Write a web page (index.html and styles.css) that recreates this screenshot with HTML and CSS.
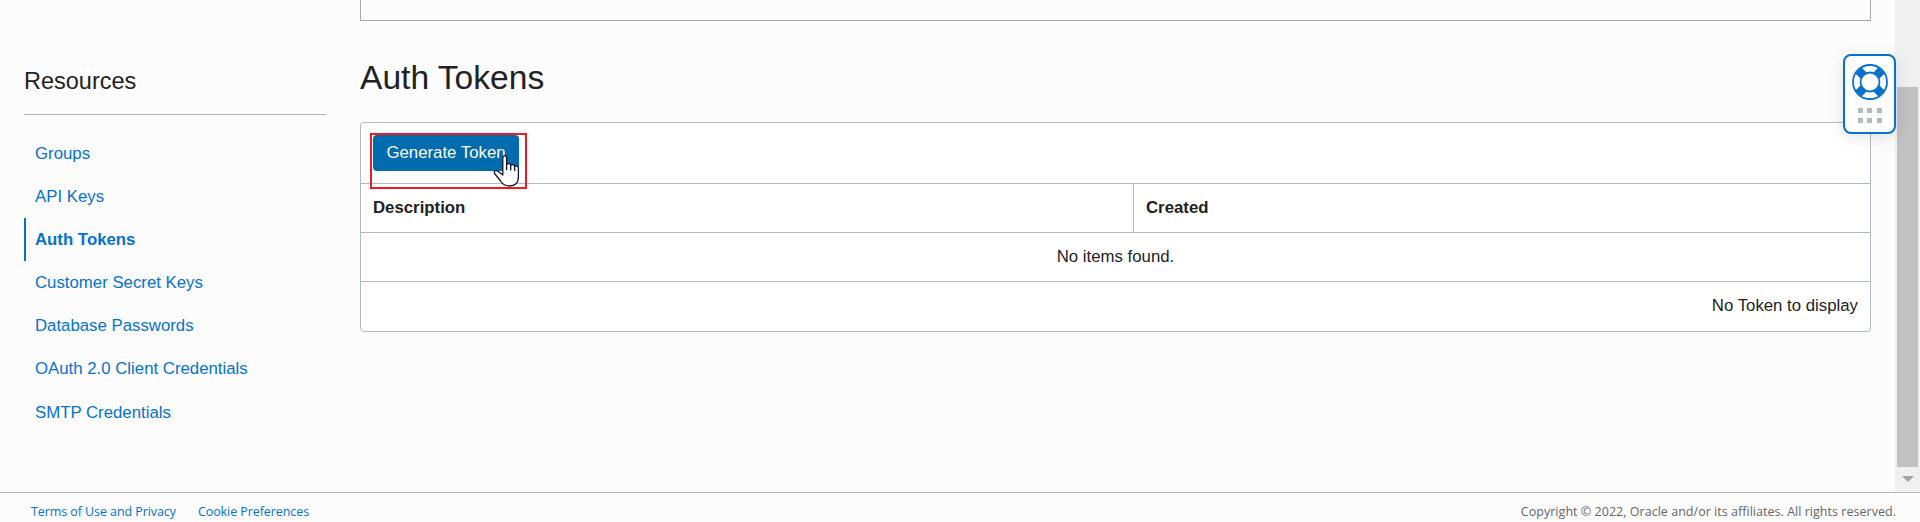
FILE: index.html
```html
<!DOCTYPE html>
<html lang="en">
<head>
<meta charset="utf-8">
<title>Auth Tokens</title>
<link rel="stylesheet" href="styles.css">
</head>
<body>
<div class="page">
  <aside class="sidebar">
    <h2 class="sidebar-title">Resources</h2>
    <nav class="nav">
      <a class="nav-item groups">Groups</a>
      <a class="nav-item">API Keys</a>
      <a class="nav-item active">Auth Tokens</a>
      <a class="nav-item">Customer Secret Keys</a>
      <a class="nav-item">Database Passwords</a>
      <a class="nav-item">OAuth 2.0 Client Credentials</a>
      <a class="nav-item">SMTP Credentials</a>
    </nav>
  </aside>
  <main class="content">
    <div class="details-panel"></div>
    <h1 class="title"><span>Auth Tokens</span></h1>
    <section class="table">
      <div class="toolbar">
        <button class="generate">Generate Token</button>
        <div class="highlight"></div>
        <svg class="cursor" width="28" height="34" viewBox="0 0 28 34">
          <path d="M9.800 21V4.400C9.800 .7 13.600 .7 13.600 4.400V10.500C14.500 9.300 17.400 9.400 17.700 11.200 18.700 10.200 21.400 10.500 21.700 12.300 22.800 11.600 25.400 12 25.400 14V23C25.400 29 22 32 16.500 32 12.500 32 9.800 30.500 7.500 27L1.600 19.500C.2 17.200 3 15.800 5 17.300L9.800 21z" fill="#fff" stroke="#14142b" stroke-width="1.300" stroke-linejoin="round"/>
          <path d="M13.600 10v6M17.700 11v5.500M21.700 12v5" fill="none" stroke="#14142b" stroke-width="1.300"/>
        </svg>
      </div>
      <div class="row head"><div class="cell first">Description</div><div class="cell">Created</div></div>
      <div class="row empty"><span>No items found.</span></div>
      <div class="row summary"><span>No Token to display</span></div>
    </section>
  </main>
  <div class="scrollbar">
    <div class="thumb"></div>
    <svg class="arrow" width="12" height="6" viewBox="0 0 12 6"><path d="M0 0H12L6 6z" fill="#a3a3a3"/></svg>
  </div>
</div>
<footer class="footer">
  <a class="terms">Terms of Use and Privacy</a>
  <a class="cookie">Cookie Preferences</a>
  <span class="copyright">Copyright © 2022, Oracle and/or its affiliates. All rights reserved.</span>
</footer>
<div class="help">
  <svg width="36" height="36" viewBox="0 0 36 36">
    <path d="M6.500 6.500L11.500 11.500M29.500 6.500L24.500 11.500M6.500 29.500L11.500 24.500M29.500 29.500L24.500 24.500" stroke="#0572ce" stroke-width="8.500"/>
    <circle cx="18" cy="18" r="17" fill="none" stroke="#0572ce" stroke-width="1.800"/>
    <circle cx="18" cy="18" r="9.500" fill="#fff" stroke="#0572ce" stroke-width="1.800"/>
  </svg>
  <div class="dots"><i></i><i></i><i></i><i></i><i></i><i></i></div>
</div>
</body>
</html>
```
FILE: styles.css
```css
* { box-sizing: border-box; }
body {
  margin: 0;
  height: 522px;
  overflow: hidden;
  display: flex;
  flex-direction: column;
  position: relative;
  background: #fcfcfc;
  color: #222;
  font: 16.800px/20px "Liberation Sans", Arial, sans-serif;
}
.page { display: flex; height: 492px; }
.sidebar { width: 302px; margin-left: 24px; }
.sidebar-title {
  margin: 0;
  height: 115px;
  padding-top: 67px;
  border-bottom: 1px solid #aeb6c0;
  font-size: 23.500px;
  line-height: 28px;
  font-weight: 400;
}
.nav { padding-top: 17px; display: flex; flex-direction: column; }
.nav-item {
  height: 43.100px;
  line-height: 43px;
  padding-left: 9px;
  border-left: 2px solid transparent;
  color: #0572ce;
  white-space: nowrap;
}
.active { border-left-color: #0572ce; font-weight: 700; }
.content { width: 1511px; margin-left: 34px; }
.details-panel { height: 21px; border: 1px solid #a9a9a9; border-top: 0; }
.title { margin: 0; height: 101px; padding-top: 37px; font-size: 33.600px; line-height: 40px; font-weight: 400; }
.table { background: #fff; border: 1px solid #b4bac4; border-radius: 4px; height: 210px; }
.toolbar { position: relative; height: 61px; padding: 12px; border-bottom: 1px solid #b4bac4; }
.generate {
  display: block;
  width: 146px;
  height: 36px;
  padding: 0;
  border: 0;
  border-radius: 4px;
  background: #006bad;
  color: #fff;
  font: inherit;
}
.highlight { position: absolute; left: 9px; top: 10px; width: 157px; height: 56px; border: 2px solid #ed1c24; z-index: 1; }
.cursor { position: absolute; left: 132px; top: 31px; z-index: 2; }
.row { display: flex; height: 49px; border-bottom: 1px solid #b4bac4; line-height: 48px; }
.head { font-weight: 700; }
.cell { padding-left: 12px; }
.first { width: 773px; border-right: 1px solid #b4bac4; }
.empty { justify-content: center; }
.summary { justify-content: flex-end; padding-right: 12px; border-bottom: 0; }
.scrollbar { width: 25px; margin-left: 24px; padding: 87px 2px 0; background: #f0f0f0; }
.thumb { width: 21px; height: 380px; background: #c1c1c1; }
.arrow { display: block; margin: 9px 0 0 5px; }
.footer {
  display: flex;
  height: 30px;
  padding: 0 24px 0 31px;
  border-top: 1px solid #b4bac4;
  font: 12.500px/37px "Open Sans", "Noto Sans", sans-serif;
  white-space: nowrap;
}
.footer a { color: #0572ce; letter-spacing: -.08px; }
.cookie { margin-left: 22px; }
.copyright { margin-left: auto; color: #666; letter-spacing: .03px; }
.help {
  position: absolute;
  left: 1843px;
  top: 54px;
  width: 53px;
  height: 80px;
  padding-top: 7.500px;
  border: 2px solid #0572ce;
  border-radius: 8px;
  background: #fff;
  box-shadow: 0 4px 16px rgba(0, 0, 0, .1);
  display: flex;
  flex-direction: column;
  align-items: center;
}
.help svg { flex: none; }
.dots { display: grid; grid-template-columns: repeat(3, 5px); gap: 5px 4.500px; margin-top: 8px; }
.dots i { width: 5px; height: 5px; background: #b4bac4; }
```
